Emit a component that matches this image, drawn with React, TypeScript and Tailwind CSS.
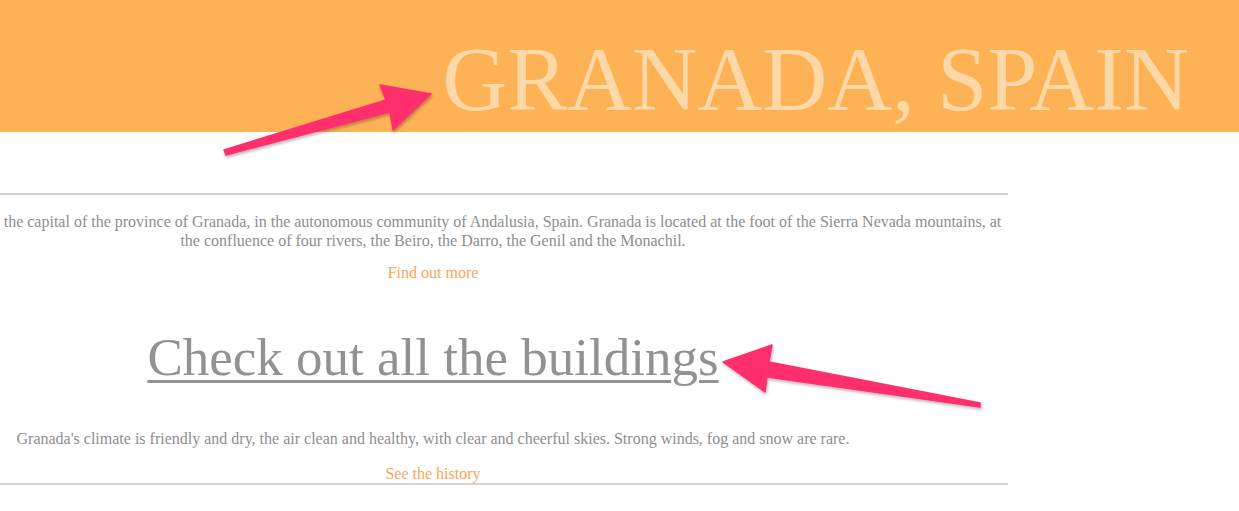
import React from "react";

const serif = { fontFamily: '"Liberation Serif", "Times New Roman", serif' };

function Arrows() {
  return (
    <svg
      className="pointer-events-none absolute left-0 top-0"
      width={1239}
      height={511}
      viewBox="0 0 1239 511"
    >
      <defs>
        <filter id="sh" x="-10%" y="-10%" width="120%" height="130%">
          <feDropShadow dx="1" dy="2" stdDeviation="1.5" floodColor="#000" floodOpacity="0.28" />
        </filter>
      </defs>
      <g filter="url(#sh)" fill="#ff2e6d" stroke="#ff2e6d" strokeLinejoin="round" strokeWidth="1.5">
        <polygon points="431,94 380,85 386,100 224,150 226,155 390,112 393,130" />
        <polygon points="723,362 772,345 769,362 980,403 980,407 767,377 765,392" />
      </g>
    </svg>
  );
}

export default function App() {
  return (
    <div className="relative h-[511px] w-[1239px] overflow-hidden bg-white" style={serif}>
      <header className="flex h-[132px] items-start justify-end bg-[#fdb256] pr-[50px]">
        <h1 className="mt-[35px] text-[90px] font-normal leading-[90px] text-[#fed8a6]">
          GRANADA, SPAIN
        </h1>
      </header>

      <main className="ml-[-142px] w-[1150px] text-center">
        <hr className="mt-[61px] h-[2px] border-0 bg-[#d4d4d4]" />
        <p className="mt-[17px] whitespace-nowrap text-[16px] leading-[19px] text-[#8e8e8e]">
          <span className="inline-block pl-[66px]">
            Granada is the capital of the province of Granada, in the autonomous community of Andalusia, Spain. Granada is located at the foot of the Sierra Nevada mountains, at
          </span>
          <br />
          the confluence of four rivers, the Beiro, the Darro, the Genil and the Monachil.
        </p>
        <div className="mt-[13px] text-[16px] leading-[19px]">
          <a className="text-[#f9a55c]">Find out more</a>
        </div>
        <h2 className="mt-[44px] text-[53px] font-normal leading-[62px]">
          <a className="text-[#929292] underline decoration-[3px] underline-offset-[5px]">
            Check out all the buildings
          </a>
        </h2>
        <p className="mt-[41px] text-[16px] leading-[19px] text-[#8e8e8e]">
          Granada's climate is friendly and dry, the air clean and healthy, with clear and cheerful skies. Strong winds, fog and snow are rare.
        </p>
        <div className="mt-[16px] text-[16px] leading-[19px]">
          <a className="text-[#f9a55c]">See the history</a>
        </div>
        <hr className="h-[2px] border-0 bg-[#d4d4d4]" />
      </main>

      <Arrows />
    </div>
  );
}
